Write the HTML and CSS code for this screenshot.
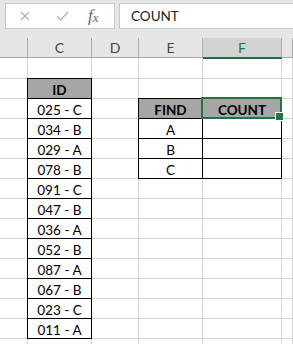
FILE: index.html
```html
<!DOCTYPE html>
<html>
<head>
<meta charset="utf-8">
<link rel="stylesheet" href="styles.css">
</head>
<body>
<div class="app">
  <div class="fbar">
    <div class="tools">
      <svg class="ic" width="10" height="10" viewBox="0 0 10 10"><path d="M1 1L9 9M9 1L1 9" stroke="#b4b4b4" stroke-width="1.4" fill="none"/></svg>
      <svg class="ic" width="13" height="10" viewBox="0 0 13 10"><path d="M1 5.5L4.5 9L12 1" stroke="#b4b4b4" stroke-width="1.4" fill="none"/></svg>
      <span class="fx">f<span class="fxx">x</span></span>
    </div>
    <div class="formula">COUNT</div>
  </div>
  <div class="sheet">
    <div class="hd"></div><div class="hd">C</div><div class="hd">D</div><div class="hd">E</div><div class="hd hsel">F</div><div class="hd"></div>

    <div class="c"></div><div class="c"></div><div class="c"></div><div class="c"></div><div class="c"></div><div class="c"></div>
    <div class="c"></div><div class="c t th">ID</div><div class="c"></div><div class="c"></div><div class="c"></div><div class="c"></div>
    <div class="c"></div><div class="c t">025 - C</div><div class="c"></div><div class="c t th">FIND</div><div class="c t th sel">COUNT</div><div class="c"></div>
    <div class="c"></div><div class="c t">034 - B</div><div class="c"></div><div class="c t">A</div><div class="c t"></div><div class="c"></div>
    <div class="c"></div><div class="c t">029 - A</div><div class="c"></div><div class="c t">B</div><div class="c t"></div><div class="c"></div>
    <div class="c"></div><div class="c t">078 - B</div><div class="c"></div><div class="c t">C</div><div class="c t"></div><div class="c"></div>
    <div class="c"></div><div class="c t">091 - C</div><div class="c"></div><div class="c"></div><div class="c"></div><div class="c"></div>
    <div class="c"></div><div class="c t">047 - B</div><div class="c"></div><div class="c"></div><div class="c"></div><div class="c"></div>
    <div class="c"></div><div class="c t">036 - A</div><div class="c"></div><div class="c"></div><div class="c"></div><div class="c"></div>
    <div class="c"></div><div class="c t">052 - B</div><div class="c"></div><div class="c"></div><div class="c"></div><div class="c"></div>
    <div class="c"></div><div class="c t">087 - A</div><div class="c"></div><div class="c"></div><div class="c"></div><div class="c"></div>
    <div class="c"></div><div class="c t">067 - B</div><div class="c"></div><div class="c"></div><div class="c"></div><div class="c"></div>
    <div class="c"></div><div class="c t">023 - C</div><div class="c"></div><div class="c"></div><div class="c"></div><div class="c"></div>
    <div class="c"></div><div class="c t">011 - A</div><div class="c"></div><div class="c"></div><div class="c"></div><div class="c"></div>
    <div class="c"></div><div class="c"></div><div class="c"></div><div class="c"></div><div class="c"></div><div class="c"></div>
  </div>
</div>
</body>
</html>
```

FILE: styles.css
```css
* { box-sizing: border-box; }
html, body { margin: 0; padding: 0; background: #fff; overflow: hidden; }
.app { width: 293px; height: 344px; overflow: hidden; font-family: Lato, "Liberation Sans", sans-serif; }

.fbar {
  height: 38px;
  background: #e6e6e6;
  display: flex;
  align-items: flex-start;
  padding: 3px 0 0 5px;
  gap: 4px;
}
.tools {
  width: 110px;
  height: 26px;
  background: #fff;
  border: 1px solid #c8c8c8;
  display: flex;
  align-items: center;
  padding-left: 14px;
}
.ic { display: block; }
.tools .ic:first-child { margin-right: 26px; }
.tools .ic:nth-child(2) { margin-right: 19px; margin-top: -1px; }
.fx {
  font-family: "Liberation Serif", serif;
  font-style: italic;
  font-size: 17px;
  color: #666;
  line-height: 1;
  margin-top: -2px;
}
.fxx { font-size: 13px; position: relative; top: 1px; }
.formula {
  flex: 1;
  height: 26px;
  background: #fff;
  border: 1px solid #c8c8c8;
  border-right: none;
  padding-left: 11px;
  font-size: 13.5px;
  line-height: 25px;
  color: #222;
}

.sheet {
  display: grid;
  grid-template-columns: 28px 64px 47px 64px 79px 1fr;
  grid-template-rows: 20px 21px;
  grid-auto-rows: 20px;
}
.hd {
  background: #e6e6e6;
  border-right: 1px solid #ababab;
  border-bottom: 1px solid #ababab;
  font-size: 14px;
  color: #444;
  display: flex;
  align-items: center;
  justify-content: center;
}
.hd.hsel {
  background: #d2d2d2;
  color: #217346;
  border-bottom-color: #217346;
  box-shadow: 0 1px 0 0 #217346;
  position: relative;
  z-index: 1;
}
.c {
  border-right: 1px solid #d4d4d4;
  border-bottom: 1px solid #d4d4d4;
  font-size: 13.5px;
  color: #000;
  display: flex;
  align-items: center;
  justify-content: center;
  padding-top: 3px;
}
.c.t {
  border-right-color: #000;
  border-bottom-color: #000;
  box-shadow: -1px 0 0 0 #000, 0 -1px 0 0 #000, -1px -1px 0 0 #000;
}
.c.th { background: #a6a6a6; font-weight: bold; }
.c.sel { position: relative; z-index: 2; }
.c.sel::after {
  content: "";
  position: absolute;
  left: -2px; top: -2px; right: -1px; bottom: -1px;
  border: 2px solid #217346;
}
.c.sel::before {
  content: "";
  position: absolute;
  right: -3px; bottom: -3px;
  width: 7px; height: 7px;
  background: #217346;
  border: 1px solid #fff;
  z-index: 1;
}
```
